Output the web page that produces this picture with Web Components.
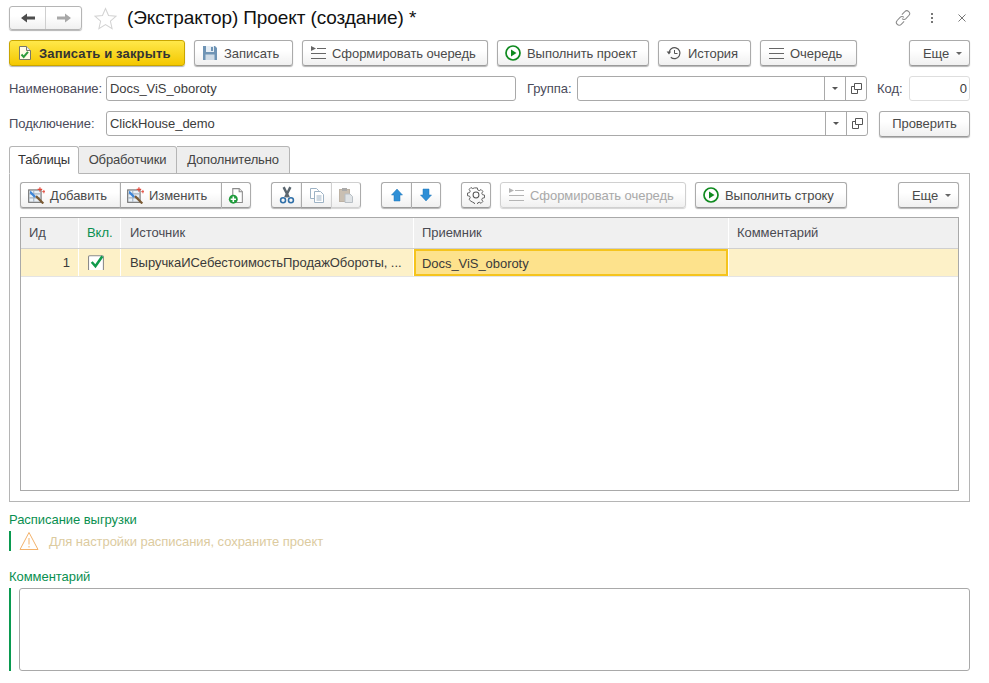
<!DOCTYPE html>
<html lang="ru">
<head>
<meta charset="utf-8">
<title>Проект (создание)</title>
<style>
  html, body { margin: 0; background: #fff; }
  body { font: 13px "Liberation Sans", Arial, sans-serif; color: #4a4a4a; letter-spacing: -.05px; }
</style>
</head>
<body>
<form-page></form-page>
<script>
// all pictures in one place, drawn on a 16x16 box unless said otherwise
const ICONS = {
  back: '<path d="M1 8l6-4.500V6.500h8v3H7v3z" fill="#4d4d4d"/>',
  forward: '<path d="M15 8L9 3.500V6.500H1v3h8v3z" fill="#a8a8a8"/>',
  star: '<path d="M8 1l2.100 4.900 5.300.5-4 3.500 1.200 5.200L8 12.300l-4.600 2.800 1.200-5.200-4-3.500 5.300-.5z" fill="#fff" stroke="#d2d2d2" stroke-width=".7"/>',
  link: '<g fill="none" stroke="#8a8a8a" stroke-width=".9"><path d="M7 5l2.600-2.600a2.400 2.400 0 0 1 3.600 3.400L10.600 8.600a2.400 2.400 0 0 1-3.400 0"/><path d="M9 11l-2.600 2.600a2.400 2.400 0 0 1-3.600-3.400L5.400 7.400a2.400 2.400 0 0 1 3.400 0"/></g>',
  dots: '<g fill="#777"><rect x="7" y="3" width="2" height="2"/><rect x="7" y="7" width="2" height="2"/><rect x="7" y="11" width="2" height="2"/></g>',
  close: '<path d="M4.500 4.500l7 7M11.500 4.500l-7 7" stroke="#777" stroke-width="1" fill="none"/>',
  savedoc: '<path d="M2.500 1.500h7l4 4v9h-11z" fill="#fffbe6" stroke="#77776a"/><path d="M9.500 1.500v4h4" fill="#eee" stroke="#77776a"/><path d="M4.500 9.500l2.200 2.400 4.300-5" fill="none" stroke="#2c9b3a" stroke-width="2"/>',
  floppy: '<path d="M1 1h12l2 2v12H1z" fill="#6f94b5"/><rect x="4" y="1" width="8" height="6" fill="#e6eef5"/><rect x="9" y="2" width="2" height="4" fill="#6f94b5"/><rect x="3.500" y="9.500" width="9" height="5.500" fill="#cfdbe6"/>',
  queue: '<g fill="#666"><path d="M1 1l5 2.500L1 6z"/><rect x="7" y="3" width="9" height="1"/><rect x="1" y="8" width="15" height="1"/><rect x="1" y="13" width="15" height="1"/></g>',
  queueoff: '<g fill="#b4b4b4"><path d="M1 1l5 2.500L1 6z"/><rect x="7" y="3" width="9" height="1"/><rect x="1" y="8" width="15" height="1"/><rect x="1" y="13" width="15" height="1"/></g>',
  play: '<circle cx="8" cy="8" r="7" fill="#fff" stroke="#0f8a1f" stroke-width="1.700"/><path d="M6 4.500L11.500 8 6 11.500z" fill="#0f8a1f"/>',
  history: '<path d="M3 8a5.500 5.500 0 1 1 1.800 4.200" fill="none" stroke="#555" stroke-width="1.200"/><path d="M.6 6.600h4.600L3 9.600z" fill="#555"/><path d="M8.500 5v3.500h3" fill="none" stroke="#555"/>',
  lines: '<g fill="#666"><rect x="1" y="3" width="15" height="1"/><rect x="1" y="8" width="15" height="1"/><rect x="1" y="13" width="15" height="1"/></g>',
  wand: '<rect x="1.500" y="3.500" width="11" height="11" fill="#e9f0f7" stroke="#707070"/><path d="M2 7h10M2 10.500h10M6 4v10" stroke="#a7b4c2" fill="none"/><path d="M3 4l5 5-1.500 1.500-4-4z" fill="#3d86d8"/><path d="M8 9l6.500 6.500" stroke="#7a5a34" stroke-width="2" fill="none"/><path d="M11.500 1v4M9.500 3h4" stroke="#e2483a" fill="none"/><path d="M15 3.500v3M13.500 5h3" stroke="#e2483a" stroke-width=".8" fill="none"/>',
  newdoc: '<path d="M4.500 1.500h6l3 3v10h-9z" fill="#fff" stroke="#8b8b8b"/><path d="M10.500 1.500v3h3" fill="#e6e6e6" stroke="#8b8b8b"/><circle cx="5" cy="11.500" r="4.200" fill="#1f9b3c"/><path d="M5 9v5M2.500 11.500h5" stroke="#fff" stroke-width="1.500"/>',
  cut: '<path d="M5 1l4.500 9M11 1L6.500 10" stroke="#5b6770" stroke-width="2.200" fill="none"/><circle cx="4.500" cy="12.700" r="2.200" fill="none" stroke="#2f6fa8" stroke-width="1.400"/><circle cx="11.500" cy="12.700" r="2.200" fill="none" stroke="#2f6fa8" stroke-width="1.400"/>',
  copy: '<path d="M1.500 1.500h6l2 2v8h-8z" fill="#fff" stroke="#9db2c4"/><path d="M5.500 4.500h6l3 3v8h-9z" fill="#fff" stroke="#9db2c4"/><path d="M7.500 9h5M7.500 11h5M7.500 13h5" stroke="#9db2c4"/>',
  paste: '<rect x="1.500" y="2.500" width="10" height="12" fill="#c9bfb2" stroke="#bdb2a4"/><rect x="4" y="1" width="5" height="3" fill="#aaa"/><path d="M7 7h5l2.500 2.500v6H7z" fill="#dfe3e6" stroke="#b8bfc5"/>',
  up: '<path d="M8 2l5.500 6H11v6H5V8H2.500z" fill="#2e8fd6" stroke="#1e76b8" stroke-width=".5"/>',
  down: '<path d="M8 14l5.500-6H11V2H5v6H2.500z" fill="#2e8fd6" stroke="#1e76b8" stroke-width=".5"/>',
  gear: '<path d="M6.700 1h2.600l.4 2 1.500.7 1.800-1.100 1.800 1.800-1.100 1.800.7 1.500 2 .4v2.600l-2 .4-.7 1.500 1.100 1.800-1.800 1.800-1.800-1.100-1.500.7-.4 2H6.700l-.4-2-1.500-.7L3 14.200l-1.800-1.800 1.100-1.800-.7-1.500-2-.4V6.100l2-.4.7-1.500L1.200 2.400 3 .6l1.800 1.100 1.500-.7z" transform="translate(.8 .8) scale(.9)" fill="none" stroke="#555" stroke-width=".9"/><circle cx="8" cy="8" r="2.600" fill="none" stroke="#555" stroke-width=".9"/>',
  warn: '<path d="M10 1.500L19 18.500H1z" fill="none" stroke="#f3b26b"/><path d="M10 7v6.500M10 15v1.500" stroke="#f3b26b"/>',
  check: '<rect x=".5" y="2.500" width="14" height="14" rx="1" fill="#fff" stroke="#8a8a8a"/><path d="M3.500 8.500l3.500 4L13.500 3" fill="none" stroke="#0f9a4c" stroke-width="2.400"/>'
};

class UiIcon extends HTMLElement {
  connectedCallback() {
    const size = this.getAttribute('size') || 16;
    const box = this.getAttribute('name') === 'warn' ? 20 : 16;
    this.attachShadow({ mode: 'open' }).innerHTML = `
      <style>:host { display: inline-flex; flex: none; } svg { display: block; }</style>
      <svg width="${size}" height="${size}" viewBox="0 0 ${box} ${box}">${ICONS[this.getAttribute('name')]}</svg>`;
  }
}
customElements.define('ui-icon', UiIcon);

const buttonTemplate = document.createElement('template');
buttonTemplate.innerHTML = `
<style>
  :host {
    display: inline-flex;
    align-items: center;
    justify-content: center;
    gap: 7px;
    box-sizing: border-box;
    height: 26px;
    flex: none;
    border: 1px solid #ababab;
    border-bottom-color: #9a9a9a;
    border-radius: 3px;
    background: linear-gradient(#fff 40%, #f0f0f0);
    box-shadow: 0 1px 1px #b5b5b5;
    color: #4a4a4a;
    white-space: nowrap;
  }
  :host([lead]) { justify-content: flex-start; padding-left: 7px; gap: 6px; }
  :host([more]) { justify-content: flex-start; padding-left: 13px; gap: 7px; }
  :host([primary]) {
    background: linear-gradient(#ffe84a, #f4c800);
    border-color: #c9a600;
    color: #333;
    font-weight: bold;
    letter-spacing: .15px;
  }
  :host([disabled]) {
    color: #a9a9a9;
    border-color: #d0d0d0;
    box-shadow: 0 1px 1px #d4d4d4;
  }
  :host([seg]) { border-radius: 0; border-right: 0; }
  :host([seg=first]) { border-radius: 3px 0 0 3px; }
  :host([seg=last]) { border-radius: 0 3px 3px 0; border-right: 1px solid #ababab; }
  .arrow { width: 0; height: 0; border: 3px solid transparent; border-top: 3px solid #666; border-bottom: 0; }
</style>
<slot name="icon"></slot><slot></slot>`;

class UiButton extends HTMLElement {
  connectedCallback() {
    const root = this.attachShadow({ mode: 'open' });
    root.appendChild(buttonTemplate.content.cloneNode(true));
    if (this.hasAttribute('more')) {
      const a = document.createElement('span');
      a.className = 'arrow';
      root.appendChild(a);
    }
  }
}
customElements.define('ui-button', UiButton);

const fieldTemplate = document.createElement('template');
fieldTemplate.innerHTML = `
<style>
  :host {
    display: flex;
    align-items: stretch;
    box-sizing: border-box;
    height: 25px;
    flex: none;
    border: 1px solid #a9a9a9;
    border-radius: 3px;
    background: #fff;
    color: #3c3c3c;
  }
  :host([soft]) { border-color: #dedede; }
  .value { flex: 1; padding: 0 3px; line-height: 23px; white-space: nowrap; overflow: hidden; }
  :host([right]) .value { text-align: right; padding-right: 2px; }
  .btn { width: 20px; border-left: 1px solid #a9a9a9; display: flex; align-items: center; justify-content: center; }
  .drop { width: 0; height: 0; border: 3px solid transparent; border-top: 3px solid #555; border-bottom: 0; }
  svg { display: block; }
</style>
<div class="value"></div>`;

class UiField extends HTMLElement {
  connectedCallback() {
    const root = this.attachShadow({ mode: 'open' });
    root.appendChild(fieldTemplate.content.cloneNode(true));
    if (this.hasAttribute('choice')) {
      root.innerHTML += `<div class="btn"><span class="drop"></span></div>
        <div class="btn"><svg width="11" height="11" viewBox="0 0 11 11"><path d="M3.500 .5h7v6h-7zM3.500 3.500H.5v7h6v-4" fill="none" stroke="#555"/></svg></div>`;
    }
    root.querySelector('.value').textContent = this.getAttribute('value') || '';
  }
}
customElements.define('ui-field', UiField);

class UiHeader extends HTMLElement {
  connectedCallback() {
    this.attachShadow({ mode: 'open' }).innerHTML = `
      <style>
        :host { display: flex; align-items: center; height: 24px; }
        .nav { display: flex; width: 73px; height: 24px; box-sizing: border-box; border: 1px solid #b5b5b5; border-radius: 3px; background: linear-gradient(#fff 40%, #f0f0f0); box-shadow: 0 1px 1px #b5b5b5; }
        .nav div { flex: 1; display: flex; align-items: center; justify-content: center; }
        .nav div + div { border-left: 1px solid #cfcfcf; }
        .star { margin-left: 12px; }
        h1 { margin: 0 0 0 10px; font: 19px "Liberation Sans", Arial, sans-serif; color: #111; flex: 1; letter-spacing: -.1px; }
        .tools { display: flex; align-items: center; gap: 12px; }
        .tools .end { margin-left: 2px; }
      </style>
      <div class="nav"><div><ui-icon name="back"></ui-icon></div><div><ui-icon name="forward"></ui-icon></div></div>
      <ui-icon class="star" name="star" size="23"></ui-icon>
      <h1>(Экстрактор) Проект (создание) *</h1>
      <div class="tools"><ui-icon name="link" size="18"></ui-icon><ui-icon name="dots"></ui-icon><ui-icon class="end" name="close"></ui-icon></div>`;
  }
}
customElements.define('ui-header', UiHeader);

const TAB_WIDTHS = [70, 98, 113];

class UiTabs extends HTMLElement {
  connectedCallback() {
    const names = this.getAttribute('names').split('|');
    this.attachShadow({ mode: 'open' }).innerHTML = `
      <style>
        :host { display: block; }
        .strip { display: flex; height: 28px; position: relative; z-index: 1; margin-bottom: -1px; letter-spacing: -.15px; }
        .tab { box-sizing: border-box; height: 28px; text-align: center; line-height: 26px; border: 1px solid #b5b5b5; border-left-width: 0; border-radius: 0 3px 0 0; background: #eee; color: #444; }
        .tab.on { background: #fff; border-left-width: 1px; border-bottom-color: #fff; border-radius: 3px 3px 0 0; color: #333; }
        .body { border: 1px solid #b5b5b5; padding: 8px 10px 10px; height: 329px; box-sizing: border-box; }
      </style>
      <div class="strip">${names.map((n, i) => `<div class="tab ${i ? '' : 'on'}" style="width:${TAB_WIDTHS[i]}px">${n}</div>`).join('')}</div>
      <div class="body"><slot></slot></div>`;
  }
}
customElements.define('ui-tabs', UiTabs);

class UiTable extends HTMLElement {
  connectedCallback() {
    this.attachShadow({ mode: 'open' }).innerHTML = `
      <style>
        :host { display: block; box-sizing: border-box; height: 274px; border: 1px solid #a9a9a9; }
        .row { display: grid; grid-template-columns: 57px 41px 292px 314px 1fr; gap: 1px; }
        .row > div { box-sizing: border-box; padding: 0 8px; white-space: nowrap; overflow: hidden; }
        .head { border-bottom: 1px solid #cfcfcf; }
        .head > div { height: 30px; line-height: 29px; background: #f0f0f0; color: #4a4a52; }
        .head .green { color: #0a8f50; }
        .head .src, .data .src { padding-left: 9px; }
        .data { border-bottom: 1px solid #e4e4e4; background: #fff; }
        .data > div { height: 27px; line-height: 28px; background: #fdf1c8; color: #3a3a3a; }
        .num { text-align: right; }
        .data .box { padding: 3px 0 0 9px; }
        .data .active { background: #fde28c; border: 2px solid #f5c41d; line-height: 25px; padding: 0 6px; }
      </style>
      <div class="row head"><div>Ид</div><div class="green">Вкл.</div><div class="src">Источник</div><div>Приемник</div><div>Комментарий</div></div>
      <div class="row data">
        <div class="num">1</div>
        <div class="box"><ui-icon name="check" size="17"></ui-icon></div>
        <div class="src">ВыручкаИСебестоимостьПродажОбороты, ...</div>
        <div class="active">Docs_ViS_oboroty</div>
        <div></div>
      </div>`;
  }
}
customElements.define('ui-table', UiTable);

class FormPage extends HTMLElement {
  connectedCallback() {
    this.attachShadow({ mode: 'open' }).innerHTML = `
      <style>
        :host { display: block; padding: 6px 19px 0 9px; }
        .bar { display: flex; align-items: flex-start; }
        .top { margin-top: 10px; gap: 9px; }
        .fields { margin-top: 10px; height: 25px; align-items: center; }
        .lbl { flex: none; color: #4a4a5a; white-space: nowrap; }
        .spacer { flex: 1; }
        ui-tabs { margin-top: 10px; }
        .tools { gap: 9px; margin-bottom: 9px; }
        .group { display: flex; flex: none; }
        .caption { color: #0a8f50; line-height: 15px; }
        .note { display: flex; align-items: center; gap: 10px; height: 20px; margin-top: 4px; border-left: 2px solid #0a9a50; padding-left: 8px; color: #dccb9f; }
        .memo { display: flex; margin-top: 4px; border-left: 2px solid #0a9a50; padding-left: 8px; }
        .memo div { flex: 1; height: 83px; box-sizing: border-box; border: 1px solid #a9a9a9; border-radius: 3px; }
      </style>
      <ui-header></ui-header>

      <div class="bar top">
        <ui-button lead primary style="width:176px"><ui-icon slot="icon" name="savedoc"></ui-icon>Записать и закрыть</ui-button>
        <ui-button lead style="width:99px"><ui-icon slot="icon" name="floppy"></ui-icon>Записать</ui-button>
        <ui-button lead style="width:186px"><ui-icon slot="icon" name="queue"></ui-icon>Сформировать очередь</ui-button>
        <ui-button lead style="width:152px"><ui-icon slot="icon" name="play"></ui-icon>Выполнить проект</ui-button>
        <ui-button lead style="width:93px"><ui-icon slot="icon" name="history"></ui-icon>История</ui-button>
        <ui-button lead style="width:97px"><ui-icon slot="icon" name="lines"></ui-icon>Очередь</ui-button>
        <span class="spacer"></span>
        <ui-button more style="width:61px">Еще</ui-button>
      </div>

      <div class="bar fields">
        <span class="lbl" style="width:97px">Наименование:</span>
        <ui-field value="Docs_ViS_oboroty" style="width:410px"></ui-field>
        <span class="lbl" style="width:50px;margin-left:11px">Группа:</span>
        <ui-field choice style="width:290px"></ui-field>
        <span class="lbl" style="width:32px;margin-left:10px">Код:</span>
        <ui-field soft right value="0" style="width:61px"></ui-field>
      </div>

      <div class="bar fields">
        <span class="lbl" style="width:97px">Подключение:</span>
        <ui-field choice value="ClickHouse_demo" style="width:762px"></ui-field>
        <span class="spacer"></span>
        <ui-button style="width:91px">Проверить</ui-button>
      </div>

      <ui-tabs names="Таблицы|Обработчики|Дополнительно">
        <div class="bar tools">
          <div class="group">
            <ui-button lead seg="first" style="width:100px;padding-left:6px;gap:5px"><ui-icon slot="icon" name="wand" size="18"></ui-icon>Добавить</ui-button>
            <ui-button lead seg="mid" style="width:101px;padding-left:5px;gap:5px"><ui-icon slot="icon" name="wand" size="18"></ui-icon>Изменить</ui-button>
            <ui-button seg="last" style="width:30px"><ui-icon slot="icon" name="newdoc" size="17"></ui-icon></ui-button>
          </div>
          <div class="group" style="margin-left:11px">
            <ui-button seg="first" style="width:30px"><ui-icon slot="icon" name="cut" size="18"></ui-icon></ui-button>
            <ui-button seg="mid" style="width:30px"><ui-icon slot="icon" name="copy"></ui-icon></ui-button>
            <ui-button seg="last" disabled style="width:30px"><ui-icon slot="icon" name="paste"></ui-icon></ui-button>
          </div>
          <div class="group" style="margin-left:11px">
            <ui-button seg="first" style="width:30px"><ui-icon slot="icon" name="up"></ui-icon></ui-button>
            <ui-button seg="last" style="width:30px"><ui-icon slot="icon" name="down"></ui-icon></ui-button>
          </div>
          <ui-button style="width:30px;margin-left:11px"><ui-icon slot="icon" name="gear" size="18"></ui-icon></ui-button>
          <ui-button lead disabled style="width:186px"><ui-icon slot="icon" name="queueoff"></ui-icon>Сформировать очередь</ui-button>
          <ui-button lead style="width:152px"><ui-icon slot="icon" name="play"></ui-icon>Выполнить строку</ui-button>
          <span class="spacer"></span>
          <ui-button more style="width:61px">Еще</ui-button>
        </div>
        <ui-table></ui-table>
      </ui-tabs>

      <div class="caption" style="margin-top:10px">Расписание выгрузки</div>
      <div class="note"><ui-icon name="warn" size="20"></ui-icon>Для настройки расписания, сохраните проект</div>
      <div class="caption" style="margin-top:18px">Комментарий</div>
      <div class="memo"><div></div></div>`;
  }
}
customElements.define('form-page', FormPage);
</script>
</body>
</html>
